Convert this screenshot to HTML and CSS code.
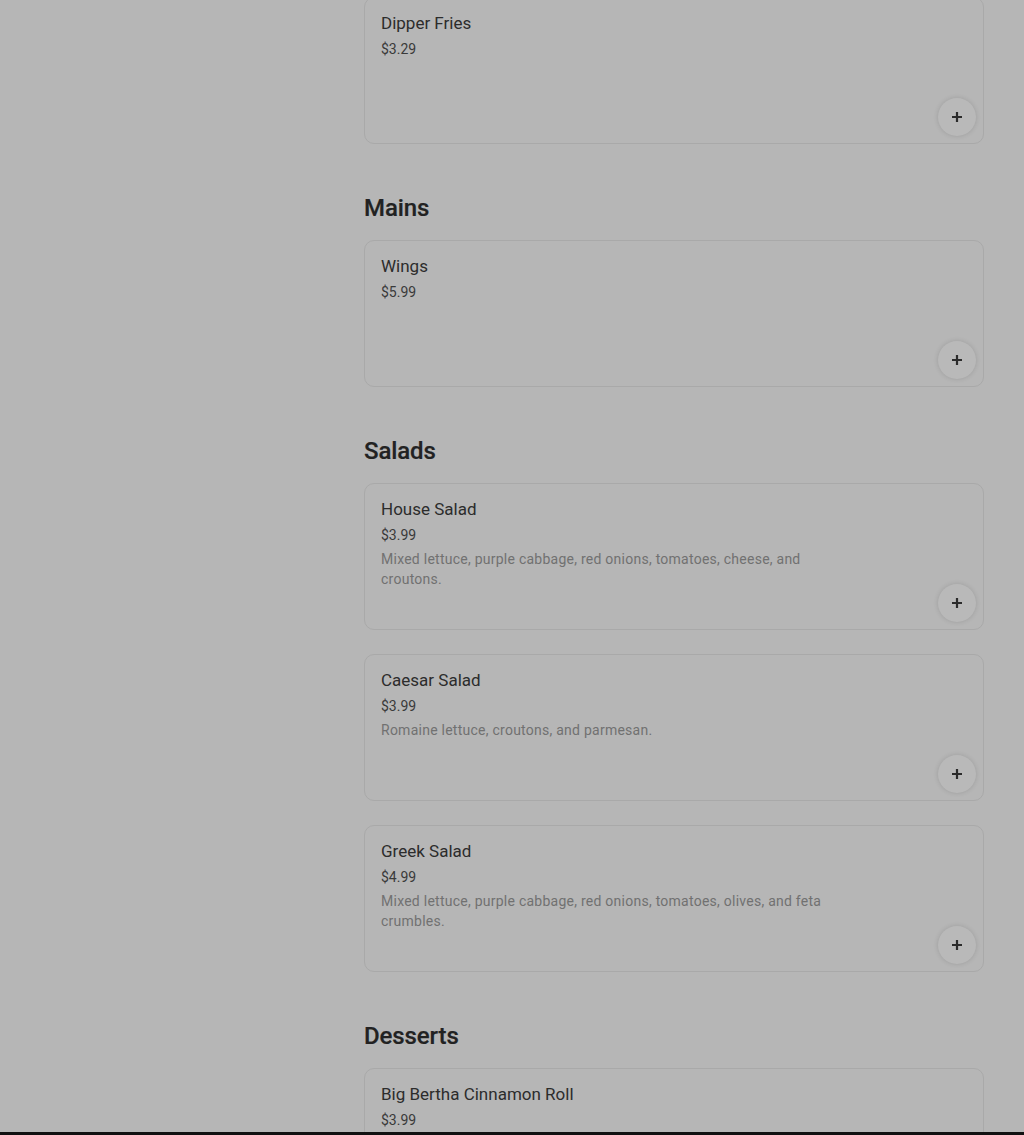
FILE: index.html
```html
<!DOCTYPE html>
<html lang="en">
<head>
<meta charset="utf-8">
<title>Menu</title>
<link rel="stylesheet" href="styles.css">
</head>
<body>
<div class="page">
  <aside class="sidebar"></aside>
  <main class="menu">
    <section class="section first">
      <div class="card">
        <div class="name">Dipper Fries</div>
        <div class="price">$3.29</div>
        <button class="add" aria-label="Add"><svg viewBox="0 0 12 12" width="12" height="12"><path d="M6 1v10M1 6h10" stroke="#2b2b2b" stroke-width="2.2" fill="none"/></svg></button>
      </div>
    </section>
    <section class="section">
      <h2 class="heading">Mains</h2>
      <div class="card">
        <div class="name">Wings</div>
        <div class="price">$5.99</div>
        <button class="add" aria-label="Add"><svg viewBox="0 0 12 12" width="12" height="12"><path d="M6 1v10M1 6h10" stroke="#2b2b2b" stroke-width="2.2" fill="none"/></svg></button>
      </div>
    </section>
    <section class="section">
      <h2 class="heading">Salads</h2>
      <div class="card">
        <div class="name">House Salad</div>
        <div class="price">$3.99</div>
        <div class="desc">Mixed lettuce, purple cabbage, red onions, tomatoes, cheese, and croutons.</div>
        <button class="add" aria-label="Add"><svg viewBox="0 0 12 12" width="12" height="12"><path d="M6 1v10M1 6h10" stroke="#2b2b2b" stroke-width="2.2" fill="none"/></svg></button>
      </div>
      <div class="card">
        <div class="name">Caesar Salad</div>
        <div class="price">$3.99</div>
        <div class="desc">Romaine lettuce, croutons, and parmesan.</div>
        <button class="add" aria-label="Add"><svg viewBox="0 0 12 12" width="12" height="12"><path d="M6 1v10M1 6h10" stroke="#2b2b2b" stroke-width="2.2" fill="none"/></svg></button>
      </div>
      <div class="card">
        <div class="name">Greek Salad</div>
        <div class="price">$4.99</div>
        <div class="desc">Mixed lettuce, purple cabbage, red onions, tomatoes, olives, and feta crumbles.</div>
        <button class="add" aria-label="Add"><svg viewBox="0 0 12 12" width="12" height="12"><path d="M6 1v10M1 6h10" stroke="#2b2b2b" stroke-width="2.2" fill="none"/></svg></button>
      </div>
    </section>
    <section class="section">
      <h2 class="heading">Desserts</h2>
      <div class="card">
        <div class="name">Big Bertha Cinnamon Roll</div>
        <div class="price">$3.99</div>
        <button class="add" aria-label="Add"><svg viewBox="0 0 12 12" width="12" height="12"><path d="M6 1v10M1 6h10" stroke="#2b2b2b" stroke-width="2.2" fill="none"/></svg></button>
      </div>
    </section>
  </main>
</div>
<div class="bottom-edge"></div>
</body>
</html>
```
FILE: styles.css
```css
html, body {
  margin: 0;
  padding: 0;
  background: #b6b6b6;
  font-family: Roboto, "Liberation Sans", sans-serif;
  color: #2e2e2e;
  overflow: hidden;
  height: 1135px;
}

.page {
  display: flex;
  margin-top: -3px;
}

.sidebar {
  width: 364px;
  flex: none;
}

.menu {
  width: 620px;
  display: flex;
  flex-direction: column;
  gap: 48px;
}

.section {
  display: flex;
  flex-direction: column;
  gap: 24px;
}

.heading {
  margin: 0 0 -8px;
  font-family: Roboto, "Liberation Sans", sans-serif;
  font-size: 24px;
  line-height: 32px;
  font-weight: 500;
  letter-spacing: -0.1px;
  color: #222;
  -webkit-text-stroke: 0.2px #222;
}

.card {
  position: relative;
  box-sizing: border-box;
  height: 147px;
  border: 1px solid #a9a9a9;
  border-radius: 10px;
  padding: 15px 16px 16px;
}

.name {
  font-size: 17px;
  line-height: 20px;
  color: #2c2c2c;
}

.price {
  margin-top: 6px;
  font-size: 14px;
  line-height: 20px;
  color: #3a3a3a;
}

.desc {
  margin-top: 4px;
  max-width: 460px;
  font-size: 14px;
  line-height: 20px;
  letter-spacing: 0.25px;
  color: #717171;
}

.add {
  position: absolute;
  right: 7px;
  bottom: 7px;
  width: 38px;
  height: 38px;
  padding: 0;
  border: none;
  border-radius: 50%;
  background: #b9b9b9;
  box-shadow: 0 0 5px rgba(0, 0, 0, 0.14);
  display: flex;
  align-items: center;
  justify-content: center;
}

.add svg {
  display: block;
}

.bottom-edge {
  position: fixed;
  left: 0;
  right: 0;
  bottom: 0;
  height: 3px;
  background: #111;
}
```
